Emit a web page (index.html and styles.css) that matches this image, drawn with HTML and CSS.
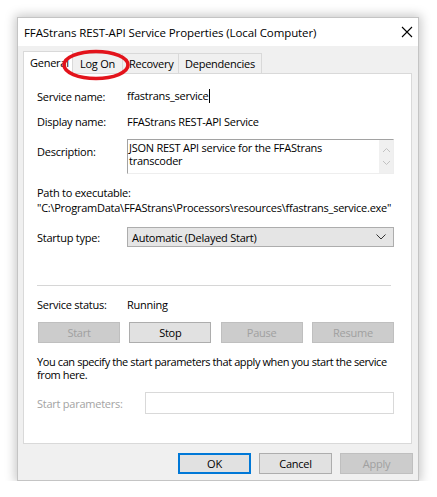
FILE: index.html
```html
<!DOCTYPE html>
<html lang="en">
<head>
<meta charset="utf-8">
<title>FFAStrans REST-API Service Properties (Local Computer)</title>
<link rel="stylesheet" href="styles.css">
</head>
<body>
<div class="window">
  <div class="titlebar">
    <span class="title">FFAStrans REST-API Service Properties (Local Computer)</span>
    <svg class="close" width="12" height="12" viewBox="0 0 12 12"><path d="M1 1 L11 11 M11 1 L1 11" stroke="#000" stroke-width="1.1" fill="none"/></svg>
  </div>

  <div class="tabs">
    <div class="tab selected">General</div>
    <div class="tab logon">Log On</div>
    <div class="tab recovery">Recovery</div>
    <div class="tab">Dependencies</div>
    <svg class="highlight" width="72" height="34" viewBox="0 0 72 34"><ellipse cx="36" cy="17" rx="32" ry="13.5" fill="none" stroke="#e3131b" stroke-width="3.6"/></svg>
  </div>

  <div class="panel">
    <div class="row first">
      <span class="label">Service name:</span>
      <span class="value">ffastrans_service<span class="caret"></span></span>
    </div>
    <div class="row second">
      <span class="label">Display name:</span>
      <span class="value">FFAStrans REST-API Service</span>
    </div>
    <div class="row desc">
      <span class="label desc-label">Description:</span>
      <div class="textbox">
        <div class="textbox-text">JSON REST API service for the FFAStrans transcoder</div>
        <div class="scroll">
          <svg width="9" height="6" viewBox="0 0 9 6"><path d="M1 5 L4.5 1.5 L8 5" stroke="#c2c2c2" stroke-width="1" fill="none"/></svg>
          <svg width="9" height="6" viewBox="0 0 9 6"><path d="M1 1 L4.5 4.5 L8 1" stroke="#c2c2c2" stroke-width="1" fill="none"/></svg>
        </div>
      </div>
    </div>
    <div class="path-label">Path to executable:</div>
    <div class="path-value">"C:\ProgramData\FFAStrans\Processors\resources\ffastrans_service.exe"</div>
    <div class="row startup">
      <span class="label">Startup type:</span>
      <div class="combo">
        <span>Automatic (Delayed Start)</span>
        <svg width="10" height="6" viewBox="0 0 10 6"><path d="M0.5 0.5 L5 5 L9.5 0.5" stroke="#333" stroke-width="1" fill="none"/></svg>
      </div>
    </div>
    <div class="separator"></div>
    <div class="row status">
      <span class="label">Service status:</span>
      <span class="value">Running</span>
    </div>
    <div class="buttons">
      <div class="btn disabled">Start</div>
      <div class="btn">Stop</div>
      <div class="btn disabled">Pause</div>
      <div class="btn disabled">Resume</div>
    </div>
    <p class="hint">You can specify the start parameters that apply when you start the service from here.</p>
    <div class="row params">
      <span class="label muted">Start parameters:</span>
      <div class="input"></div>
    </div>
  </div>

  <div class="footer">
    <div class="btn fbtn default">OK</div>
    <div class="btn fbtn">Cancel</div>
    <div class="btn fbtn disabled">Apply</div>
  </div>
</div>
</body>
</html>
```

FILE: styles.css
```css
* { box-sizing: border-box; }

body {
  margin: 0;
  background: #ffffff;
  font-family: "Open Sans", "Noto Sans", "DejaVu Sans", sans-serif;
  font-size: 11px;
  letter-spacing: -0.25px;
  color: #000;
}

.window {
  margin: 17px 0 0 17px;
  width: 402px;
  height: 464px;
  background: #f0f0f0;
  border: 1px solid #c4c4c4;
  box-shadow: 0 0 10px 2px rgba(0, 0, 0, 0.22);
  display: flex;
  flex-direction: column;
}

.titlebar {
  height: 28px;
  background: #fff;
  display: flex;
  align-items: center;
  justify-content: space-between;
  padding: 0 5px 0 6px;
  font-size: 11.5px;
  letter-spacing: -0.1px;
}

.tabs {
  position: relative;
  display: flex;
  align-items: flex-end;
  height: 27px;
  padding-left: 5px;
}

.tab {
  height: 20px;
  padding: 0 6px;
  border: 1px solid #d9d9d9;
  border-bottom: none;
  border-left: none;
  background: #f0f0f0;
  line-height: 19px;
  white-space: nowrap;
}

.tab.selected {
  height: 23px;
  background: #fff;
  border-left: 1px solid #d9d9d9;
  padding: 0 5px 0 6px;
  margin-bottom: -1px;
  position: relative;
  z-index: 1;
  width: 50px;
  overflow: hidden;
  line-height: 21px;
}

.tab.logon { width: 50px; text-align: center; }
.tab.recovery { width: 56px; text-align: center; }

.highlight {
  position: absolute;
  left: 42px;
  top: 2px;
  z-index: 2;
}

.panel {
  margin-left: 5px;
  width: 389px;
  height: 371px;
  background: #fff;
  border: 1px solid #d9d9d9;
  padding: 0 17px 0 13px;
  line-height: 13px;
}

.row {
  display: flex;
  align-items: center;
}

.label {
  width: 90px;
  flex: none;
}

.row.first { margin-top: 15px; }
.row.second { margin-top: 12px; }

.caret {
  display: inline-block;
  width: 1px;
  height: 14px;
  background: #000;
  vertical-align: -3px;
  margin-left: 1px;
}

.row.desc {
  margin-top: 11px;
  align-items: flex-start;
}

.desc-label { margin-top: 6px; }

.textbox {
  flex: 1;
  height: 35px;
  display: flex;
  border-top: 1px solid #a2a2a2;
  border-left: 1px solid #a2a2a2;
  border-right: 1px solid #eeeeee;
  border-bottom: 1px solid #eeeeee;
}

.textbox-text {
  flex: 1;
  padding: 2px 30px 0 1px;
  line-height: 12.5px;
}

.scroll {
  width: 14px;
  background: #f0f0f0;
  display: flex;
  flex-direction: column;
  align-items: center;
  justify-content: space-around;
  padding: 4px 0;
}

.scroll svg { display: block; }

.path-label { margin-top: 12px; }
.path-value { margin-top: 2px; white-space: nowrap; }

.row.startup { margin-top: 13px; }

.combo {
  flex: 1;
  height: 20px;
  background: #e5e5e5;
  border: 1px solid #adadad;
  display: flex;
  align-items: center;
  justify-content: space-between;
  padding: 0 7px 0 4px;
}

.combo svg { display: block; }

.separator {
  margin-top: 38px;
  height: 1px;
  background: #d6d6d6;
  margin-right: 3px;
}

.row.status { margin-top: 12px; }

.buttons {
  margin-top: 11px;
  display: flex;
  justify-content: space-between;
  padding-left: 1px;
}

.btn {
  width: 82px;
  height: 21px;
  background: #e1e1e1;
  border: 1px solid #adadad;
  display: flex;
  align-items: center;
  justify-content: center;
}

.btn.disabled {
  background: #cccccc;
  border-color: #bfbfbf;
  color: #a0a0a0;
}

.hint {
  margin: 12px -6px 0 0;
  line-height: 13px;
  letter-spacing: -0.4px;
}

.row.params { margin-top: 11px; }

.label.muted {
  width: 108px;
  color: #a3a3a3;
}

.input {
  flex: 1;
  height: 22px;
  border: 1px solid #d9d9d9;
  background: #fff;
}

.footer {
  display: flex;
  justify-content: flex-end;
  gap: 8px;
  padding: 9px 5px 0 0;
}

.fbtn {
  width: 73px;
  height: 21px;
}

.fbtn.default {
  border: 2px solid #0078d7;
}
```
